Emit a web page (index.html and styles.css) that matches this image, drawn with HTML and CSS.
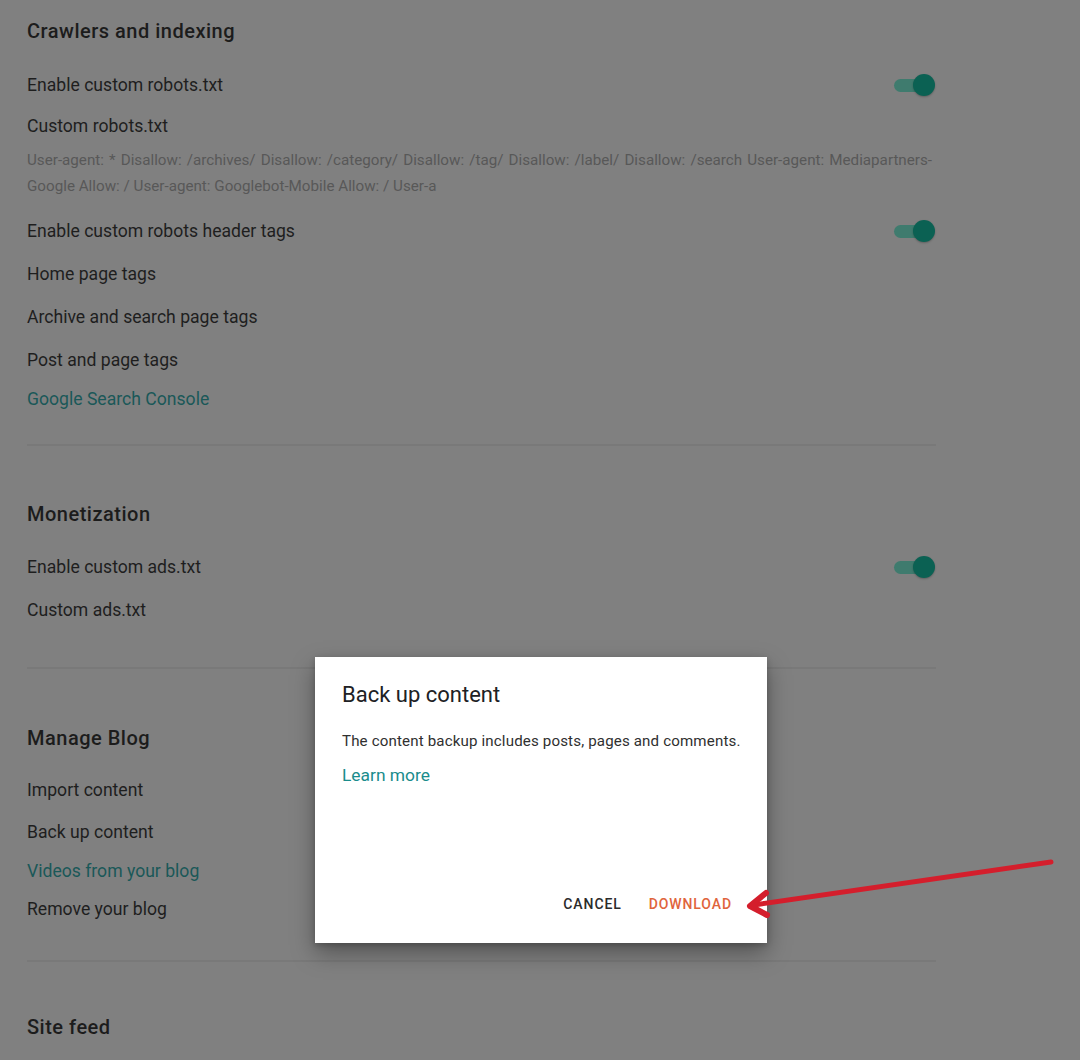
FILE: index.html
```html
<!DOCTYPE html>
<html lang="en">
<head>
<meta charset="utf-8">
<title>Settings</title>
<link rel="stylesheet" href="styles.css">
</head>
<body>
<main class="page">
  <section class="section sec-crawl">
    <h2 class="heading">Crawlers and indexing</h2>
    <div class="row first"><span>Enable custom robots.txt</span><span class="toggle"><span class="track"></span><span class="knob"></span></span></div>
    <div class="row short">Custom robots.txt</div>
    <p class="robots">User-agent: * Disallow: /archives/ Disallow: /category/ Disallow: /tag/ Disallow: /label/ Disallow: /search User-agent: Mediapartners-Google Allow: / User-agent: Googlebot-Mobile Allow: / User-a</p>
    <div class="row after-robots"><span>Enable custom robots header tags</span><span class="toggle"><span class="track"></span><span class="knob"></span></span></div>
    <div class="row">Home page tags</div>
    <div class="row">Archive and search page tags</div>
    <div class="row">Post and page tags</div>
    <div class="row link tight">Google Search Console</div>
  </section>
  <hr class="divider">
  <section class="section sec-money">
    <h2 class="heading">Monetization</h2>
    <div class="row first"><span>Enable custom ads.txt</span><span class="toggle"><span class="track"></span><span class="knob"></span></span></div>
    <div class="row">Custom ads.txt</div>
  </section>
  <hr class="divider">
  <section class="section sec-manage">
    <h2 class="heading">Manage Blog</h2>
    <div class="row first">Import content</div>
    <div class="row h42">Back up content</div>
    <div class="row link tight">Videos from your blog</div>
    <div class="row h40">Remove your blog</div>
  </section>
  <hr class="divider">
  <section class="section sec-feed">
    <h2 class="heading">Site feed</h2>
  </section>
</main>

<div class="dialog" role="dialog">
  <h3 class="dialog-title">Back up content</h3>
  <p class="dialog-text">The content backup includes posts, pages and comments.</p>
  <a class="dialog-link">Learn more</a>
  <div class="dialog-actions">
    <button class="btn">CANCEL</button>
    <button class="btn primary">DOWNLOAD</button>
  </div>
</div>

<svg class="arrow" width="1080" height="1060" viewBox="0 0 1080 1060">
  <line x1="1051" y1="862" x2="754" y2="905" stroke="#d41e2c" stroke-width="5" stroke-linecap="round"/>
  <polyline points="766,893 750,906 767,915" fill="none" stroke="#d41e2c" stroke-width="6" stroke-linecap="round" stroke-linejoin="round"/>
</svg>
</body>
</html>
```
FILE: styles.css
```css
* { box-sizing: border-box; }
html, body { margin: 0; padding: 0; }
body {
  width: 1080px;
  height: 1060px;
  overflow: hidden;
  background: #808080;
  font-family: Roboto, "Liberation Sans", sans-serif;
  color: #1d1d1d;
  position: relative;
}
.page {
  padding: 10px 0 0 27px;
  width: 936px;
}
.section { display: flex; flex-direction: column; }
.heading {
  margin: 0;
  height: 42px;
  line-height: 42px;
  font-size: 20px;
  font-weight: 500;
  letter-spacing: 0.5px;
  color: #1c1c1c;
}
.row {
  height: 43px;
  display: flex;
  align-items: center;
  justify-content: space-between;
  font-size: 17.6px;
  color: #1e1e1e;
}
.row.first { margin-top: 11px; }
.row.short { height: 40px; }
.row.tight { height: 36px; }
.row.h42 { height: 42px; }
.row.h40 { height: 40px; }
.row.link { color: #1a5858; }
.robots {
  margin: 1px 0 0;
  font-size: 15.2px;
  line-height: 26px;
  color: #585858;
  text-align: justify;
  width: 905px;
}
.row.after-robots { margin-top: 10px; }
.toggle {
  position: relative;
  width: 41px;
  height: 24px;
  margin-right: 1px;
  flex: none;
}
.track {
  position: absolute;
  left: 0;
  top: 6px;
  width: 34px;
  height: 13px;
  border-radius: 7px;
  background: #3f7b6e;
}
.knob {
  position: absolute;
  right: 0;
  top: 1px;
  width: 22px;
  height: 22px;
  border-radius: 50%;
  background: #0b6153;
  box-shadow: 0 1px 2px rgba(0,0,0,0.25);
}
.divider {
  border: 0;
  height: 2px;
  background: #797979;
  margin: 0;
  width: 909px;
}
.sec-crawl + .divider { margin-top: 27px; }
.sec-money + .divider { margin-top: 36px; }
.sec-manage + .divider { margin-top: 31px; }
.sec-money { margin-top: 47px; }
.sec-money .row.first { margin-top: 10px; }
.sec-manage { margin-top: 48px; }
.sec-manage .row.first { margin-top: 9px; }
.sec-feed { margin-top: 44px; }

.dialog {
  position: absolute;
  left: 315px;
  top: 657px;
  width: 452px;
  height: 286px;
  background: #fff;
  box-shadow: 0 10px 22px rgba(0,0,0,0.35), 0 2px 6px rgba(0,0,0,0.2);
  padding: 24px 27px 21px 27px;
  display: flex;
  flex-direction: column;
  align-items: flex-start;
}
.dialog-title {
  margin: 0;
  font-size: 22px;
  font-weight: 400;
  line-height: 28px;
  color: #202124;
}
.dialog-text {
  margin: 22px 0 0;
  font-size: 15.1px;
  line-height: 20px;
  color: #303030;
  letter-spacing: 0.15px;
  white-space: nowrap;
}
.dialog-link {
  margin-top: 12px;
  font-size: 17.4px;
  line-height: 24px;
  color: #1a8c8c;
}
.dialog-actions {
  margin-top: auto;
  align-self: flex-end;
  display: flex;
  gap: 11px;
  height: 36px;
  align-items: center;
}
.btn {
  font-family: Roboto, "Liberation Sans", sans-serif;
  background: none;
  border: 0;
  padding: 0 8px;
  height: 36px;
  font-size: 14px;
  font-weight: 500;
  letter-spacing: 0.9px;
  color: #2b2b2b;
}
.btn.primary { color: #e0643c; }
.arrow {
  position: absolute;
  left: 0;
  top: 0;
  pointer-events: none;
}
```
